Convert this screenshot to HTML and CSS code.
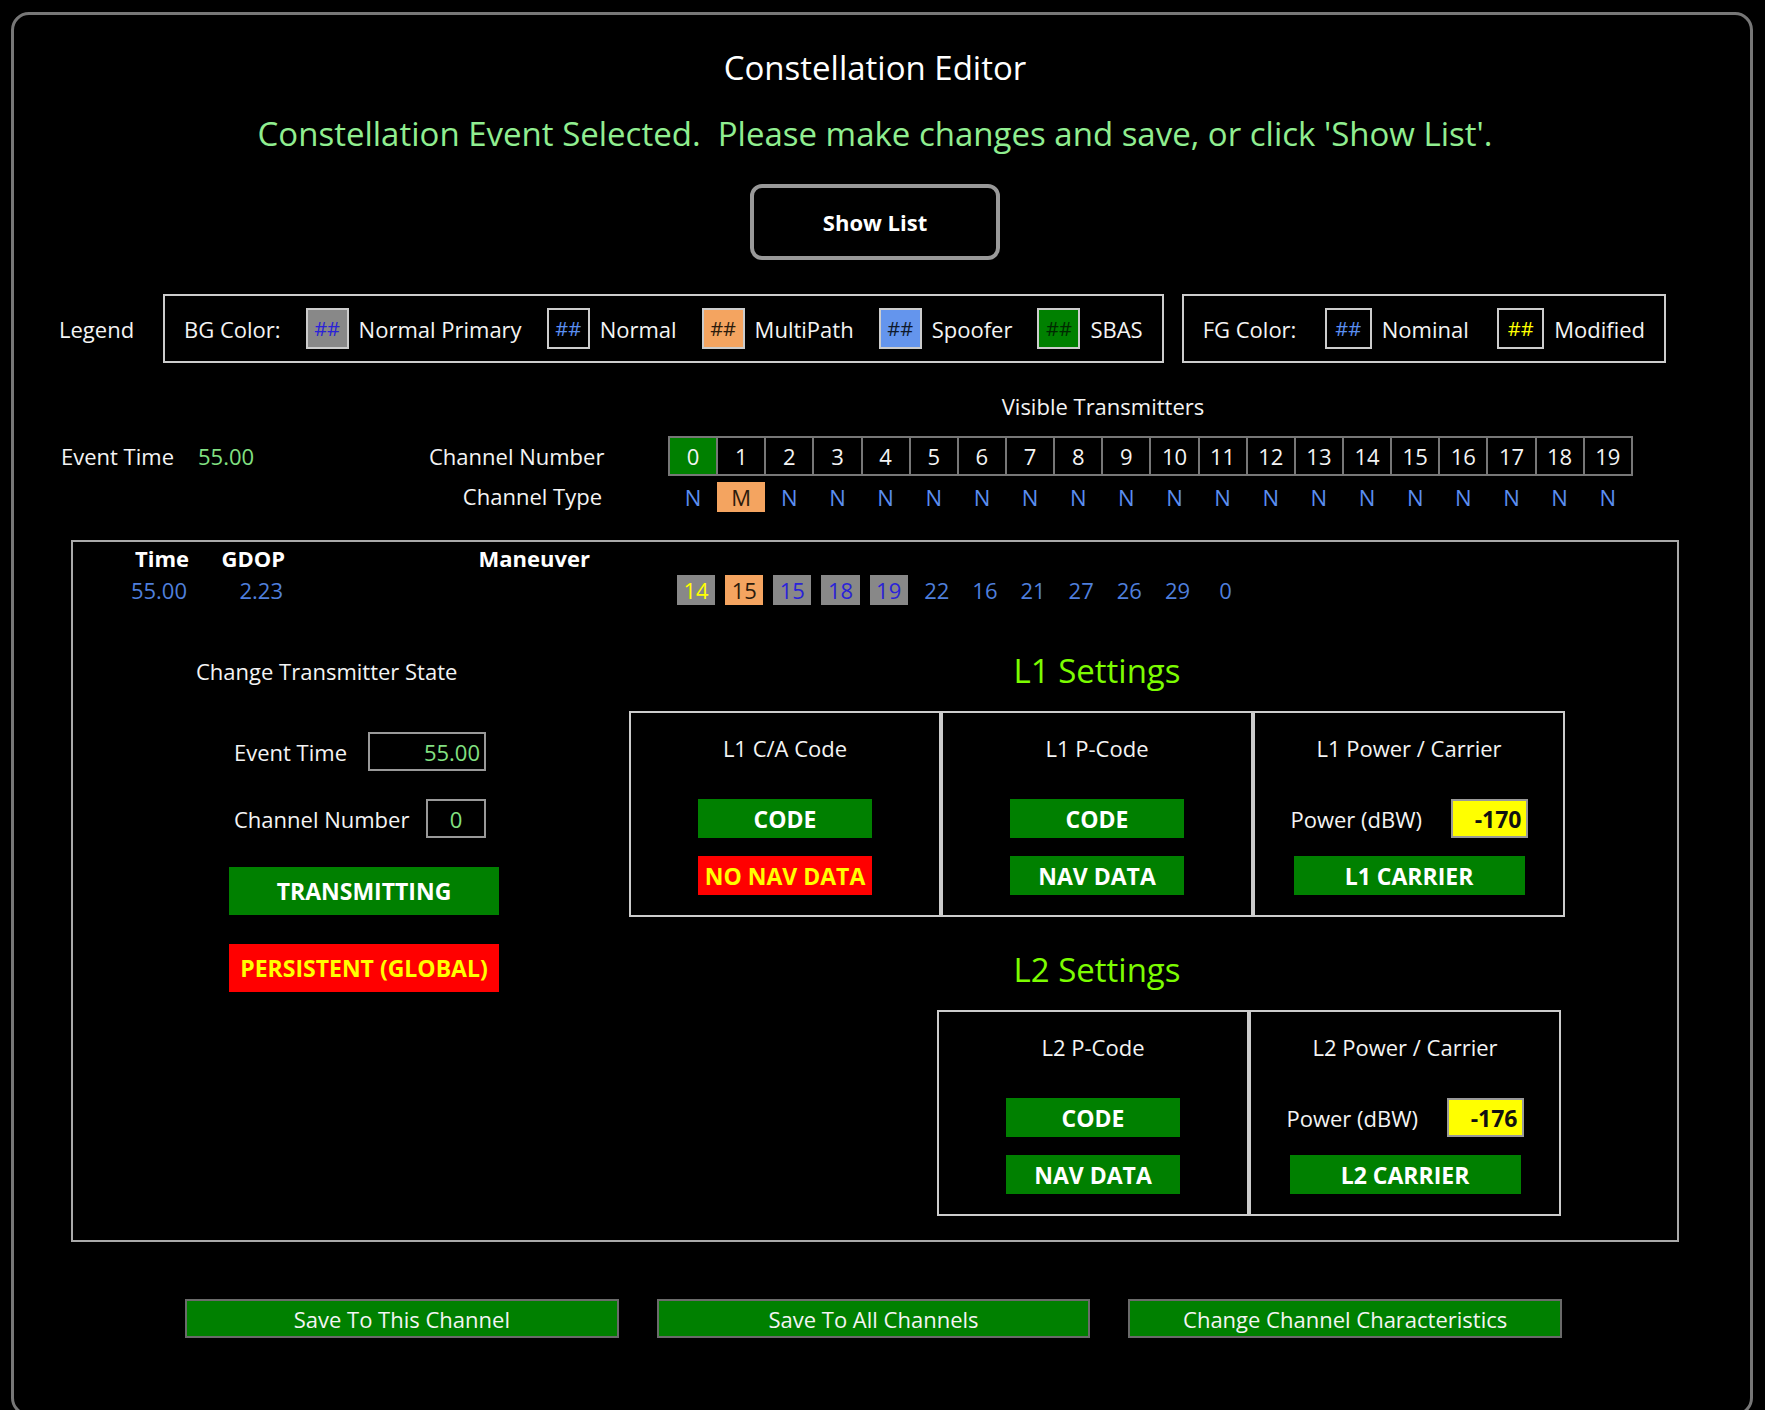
FILE: index.html
```html
<!DOCTYPE html>
<html lang="en">
<head>
<meta charset="utf-8">
<meta name="viewport" content="width=device-width, initial-scale=1">
<title>Constellation Editor</title>
<link rel="stylesheet" href="styles.css">
</head>
<body>
<div class="screen">
<main class="frame">
  <h1 class="title">Constellation Editor</h1>
  <p class="message">Constellation Event Selected.&nbsp; Please make changes and save, or click 'Show List'.</p>
  <button type="button" class="show-list">Show List</button>

  <section class="legend">
    <h2 class="legend-title">Legend</h2>
    <div class="legend-box">
      <span>BG Color:</span>
      <span class="legend-item"><span class="swatch primary">##</span>Normal Primary</span>
      <span class="legend-item"><span class="swatch normal">##</span>Normal</span>
      <span class="legend-item"><span class="swatch multipath">##</span>MultiPath</span>
      <span class="legend-item"><span class="swatch spoofer">##</span>Spoofer</span>
      <span class="legend-item"><span class="swatch sbas">##</span>SBAS</span>
    </div>
    <div class="legend-box">
      <span>FG Color:</span>
      <span class="legend-item"><span class="swatch wide normal">##</span>Nominal</span>
      <span class="legend-item"><span class="swatch wide modified">##</span>Modified</span>
    </div>
  </section>

  <section class="channels">
    <p class="event"><span>Event Time</span><span class="event-value">55.00</span></p>
    <table class="channel-table">
      <caption>Visible Transmitters</caption>
      <colgroup><col class="col-label"><col span="20"></colgroup>
      <tbody>
        <tr class="numbers"><th scope="row">Channel Number</th><td class="selected">0</td><td>1</td><td>2</td><td>3</td><td>4</td><td>5</td><td>6</td><td>7</td><td>8</td><td>9</td><td>10</td><td>11</td><td>12</td><td>13</td><td>14</td><td>15</td><td>16</td><td>17</td><td>18</td><td>19</td></tr>
        <tr class="types"><th scope="row">Channel Type</th><td>N</td><td><span class="multipath">M</span></td><td>N</td><td>N</td><td>N</td><td>N</td><td>N</td><td>N</td><td>N</td><td>N</td><td>N</td><td>N</td><td>N</td><td>N</td><td>N</td><td>N</td><td>N</td><td>N</td><td>N</td><td>N</td></tr>
      </tbody>
    </table>
  </section>

  <section class="panel">
    <table class="event-table">
      <colgroup><col class="col-time"><col class="col-gdop"><col class="col-maneuver"><col class="col-space"><col span="20"></colgroup>
      <thead>
        <tr><th scope="col">Time</th><th scope="col">GDOP</th><th scope="col">Maneuver</th><td colspan="21"></td></tr>
      </thead>
      <tbody>
        <tr><td class="reading">55.00</td><td class="reading">2.23</td><td></td><td></td><td><span class="prn primary modified">14</span></td><td><span class="prn multipath">15</span></td><td><span class="prn primary">15</span></td><td><span class="prn primary">18</span></td><td><span class="prn primary">19</span></td><td><span class="prn">22</span></td><td><span class="prn">16</span></td><td><span class="prn">21</span></td><td><span class="prn">27</span></td><td><span class="prn">26</span></td><td><span class="prn">29</span></td><td><span class="prn">0</span></td><td colspan="8"></td></tr>
      </tbody>
    </table>

    <div class="editor">
      <form class="state">
        <h2 class="state-title">Change Transmitter State</h2>
        <div class="field"><label for="event-time">Event Time</label><input id="event-time" class="box time-box" type="text" value="55.00"></div>
        <div class="field"><label for="channel">Channel Number</label><input id="channel" class="box channel-box" type="text" value="0"></div>
        <button type="button" class="toggle tall">TRANSMITTING</button>
        <button type="button" class="toggle tall off">PERSISTENT (GLOBAL)</button>
      </form>

      <div class="bands">
        <h2 class="band-title">L1 Settings</h2>
        <div class="cards">
          <section class="card">
            <h3>L1 C/A Code</h3>
            <button type="button" class="toggle">CODE</button>
            <button type="button" class="toggle off">NO NAV DATA</button>
          </section>
          <section class="card">
            <h3>L1 P-Code</h3>
            <button type="button" class="toggle">CODE</button>
            <button type="button" class="toggle">NAV DATA</button>
          </section>
          <section class="card">
            <h3>L1 Power / Carrier</h3>
            <div class="power"><label for="l1-power">Power (dBW)</label><input id="l1-power" class="box power-box" type="text" value="-170"></div>
            <button type="button" class="toggle carrier">L1 CARRIER</button>
          </section>
        </div>
        <h2 class="band-title">L2 Settings</h2>
        <div class="cards cards-two">
          <section class="card">
            <h3>L2 P-Code</h3>
            <button type="button" class="toggle">CODE</button>
            <button type="button" class="toggle">NAV DATA</button>
          </section>
          <section class="card">
            <h3>L2 Power / Carrier</h3>
            <div class="power"><label for="l2-power">Power (dBW)</label><input id="l2-power" class="box power-box" type="text" value="-176"></div>
            <button type="button" class="toggle carrier">L2 CARRIER</button>
          </section>
        </div>
      </div>
    </div>
  </section>

  <div class="actions">
    <button type="button">Save To This Channel</button>
    <button type="button">Save To All Channels</button>
    <button type="button">Change Channel Characteristics</button>
  </div>
</main>
</div>
</body>
</html>
```
FILE: styles.css
```css
* { box-sizing: border-box; }

body {
  margin: 0;
  padding: 0 5px 7px 0;
  background: #fff;
  color: #f4f4f4;
  font: 22px/30px "Open Sans", "Noto Sans", sans-serif;
}

h1, h2, h3, p { margin: 0; font-size: 22px; font-weight: 400; }
button, input { font: inherit; color: inherit; margin: 0; padding: 0; }
button { cursor: pointer; }

/* The frame runs past the bottom of the screen, which cuts off its lower edge. */
.screen {
  background: #000;
  overflow: hidden;
}

.frame {
  display: flex;
  flex-direction: column;
  margin: 12px 12px -6px 11px;
  padding: 29px 14px 75px 0;
  border: 3px solid #777;
  border-radius: 18px;
}

.title, .message, .band-title {
  font-size: 33px;
  line-height: 48px;
  text-align: center;
}
.title { color: #fff; }
.message { margin-top: 18px; color: #90ee90; }

.show-list {
  align-self: center;
  width: 250px;
  height: 76px;
  margin: 26px 0 34px;
  border: 4px solid #999;
  border-radius: 12px;
  background: #000;
  color: #fff;
  font-weight: 700;
}

/* Colours shared by the legend and the tables */
.normal { color: #5b8ef0; }
.primary { background: #888; color: #2a22d8; }
.multipath { background: #f4a460; color: #2c1b0c; }
.spoofer { background: #6495ed; color: #0f1a2c; }
.sbas { background: #008000; color: #002a00; }
.modified { color: #ff0; }

.legend {
  display: grid;
  grid-template-columns: 86px 1000fr 484fr;
  align-items: center;
  gap: 18px;
  padding: 0 70px 0 45px;
}
.legend-box {
  display: flex;
  align-items: center;
  justify-content: space-between;
  height: 69px;
  padding: 0 19px;
  border: 2px solid #ccc;
  white-space: nowrap;
}
.legend-item { display: flex; align-items: center; gap: 10px; }
.swatch {
  width: 43px;
  height: 41px;
  border: 2px solid #ccc;
  font-size: 20px;
  line-height: 37px;
  text-align: center;
}
.wide { width: 47px; }

.channels {
  display: flex;
  justify-content: space-between;
  padding: 28px 103px 0 47px;
}
.event { display: flex; gap: 24px; padding-top: 50px; }
.event-value { color: #82e082; }

.channel-table, .event-table {
  border-collapse: collapse;
  table-layout: fixed;
}
.channel-table { width: 1204px; }
.channel-table caption { padding: 0 0 15px 144px; text-align: center; }
.channel-table th { padding: 0 67px 0 0; font-weight: 400; text-align: right; white-space: nowrap; }
.channel-table td { padding: 0; text-align: center; }
.col-label { width: 240px; }
.numbers { height: 38px; }
.numbers td { border: 2px solid #777; }
.numbers .selected { background: #008000; }
.types { height: 37px; color: #5b8ef0; }
.types th { color: #f4f4f4; }
.types th, .types td { padding-top: 5px; }
.types span { display: block; }

.panel {
  margin: 28px 57px 0;
  padding-bottom: 24px;
  border: 2px solid #aaa;
}
.event-table { width: calc(100% - 44px); }
.event-table th, .event-table td { height: 32px; padding: 0; text-align: right; }
.event-table th { color: #fff; }
.event-table tbody { color: #4f7fdc; }
.event-table .reading { padding-right: 2px; }
.col-time { width: 116px; }
.col-gdop { width: 96px; }
.col-maneuver { width: 305px; }
.col-space { width: 80px; }
.prn { display: block; margin: 0 3px 0 7px; text-align: center; }

.editor {
  display: grid;
  grid-template-columns: 556fr 936fr;
  padding: 41px 112px 0 0;
}

.state { display: flex; flex-direction: column; padding: 9px 0 0 123px; }
.state-title { margin-bottom: 18px; }
.field {
  display: flex;
  align-items: center;
  justify-content: space-between;
  width: 252px;
  margin: 28px 0 0 38px;
}
.box {
  height: 39px;
  border: 2px solid #999;
  background: #000;
  color: #82e082;
  text-align: right;
}
.time-box { width: 118px; padding-right: 4px; }
.channel-box { width: 60px; text-align: center; }

.toggle {
  width: 174px;
  height: 39px;
  border: 0;
  background: #008000;
  color: #fff;
  font-size: 23px;
  font-weight: 700;
  white-space: nowrap;
}
.off { background: #f00; color: #ff0; }
.tall { width: 270px; height: 48px; margin: 29px 0 0 33px; }
.carrier { width: 231px; }

.band-title { margin-bottom: 16px; color: #7cfc00; }
.cards {
  display: grid;
  grid-template-columns: repeat(3, 1fr);
  margin-bottom: 29px;
}
.cards-two {
  grid-template-columns: repeat(2, 1fr);
  width: calc(100% * 2 / 3);
  margin: 0 4px 0 auto;
}
.card {
  display: flex;
  flex-direction: column;
  align-items: center;
  gap: 18px;
  padding: 20px 0;
  border: 2px solid #ccc;
}
.card h3 { margin-bottom: 18px; }
.power {
  display: flex;
  align-items: center;
  justify-content: space-between;
  width: 237px;
  white-space: nowrap;
}
.power-box {
  width: 77px;
  padding-right: 4px;
  background: #ff0;
  color: #111;
  font-size: 23px;
  font-weight: 700;
}

.actions {
  display: grid;
  grid-template-columns: repeat(3, 1fr);
  gap: 38px;
  padding: 57px 174px 0 171px;
}
.actions button {
  height: 39px;
  border: 2px solid #6a6a6a;
  background: #008000;
}
```
